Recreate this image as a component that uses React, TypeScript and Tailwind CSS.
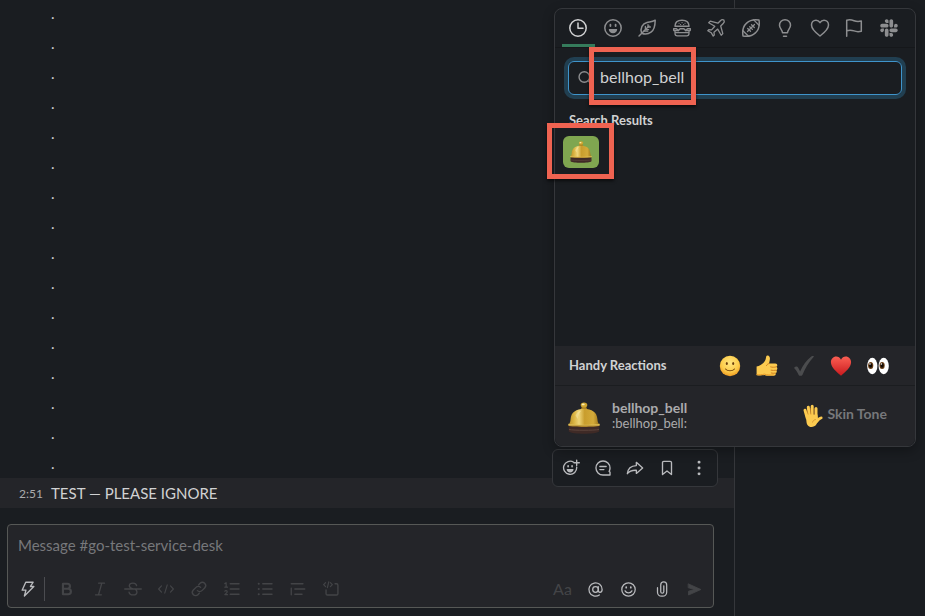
import { useState, type ReactNode } from "react";
import { clsx } from "clsx";
import { FaSlack } from "react-icons/fa";

type IconProps = {
  children: ReactNode;
  className?: string;
};

const Icon = ({ children, className = "size-5" }: IconProps) => (
  <svg
    viewBox="0 0 20 20"
    className={className}
    fill="none"
    stroke="currentColor"
    strokeWidth="1.5"
    strokeLinecap="round"
    strokeLinejoin="round"
    aria-hidden="true"
  >
    {children}
  </svg>
);

const Bell = ({ id, className }: { id: string; className: string }) => (
  <svg viewBox="0 0 32 32" className={className} aria-hidden="true">
    <defs>
      <linearGradient id={`${id}-dome`} x1="0" x2="1" y1="0" y2="0">
        <stop offset="0" stopColor="#b98f27" />
        <stop offset="0.18" stopColor="#dbb544" />
        <stop offset="0.34" stopColor="#eed478" />
        <stop offset="0.52" stopColor="#c99d2d" />
        <stop offset="0.8" stopColor="#d3aa3a" />
        <stop offset="1" stopColor="#9a7119" />
      </linearGradient>
      <linearGradient id={`${id}-rim`} x1="0" x2="0" y1="0" y2="1">
        <stop offset="0" stopColor="#efd061" />
        <stop offset="1" stopColor="#a37823" />
      </linearGradient>
    </defs>
    <path d="M.8 23.500h30.400v6c-2 1.600-8.200 2.200-15.200 2.200S2.800 31.100.8 29.500z" fill="#3f2a26" />
    <path d="M1 27.500c5 1 25 1 30 0" stroke="#5d453d" fill="none" />
    <path d="M14 4.500h4l1.600 4h-7.200z" fill="#a98021" />
    <ellipse cx="16" cy="3" rx="3.300" ry="2.500" fill="#cfa52f" />
    <ellipse cx="15.200" cy="2.400" rx="1.500" ry=".9" fill="#fbeeb0" />
    <path
      d="M.6 22.500c1.600-1.500 1.800-3.300 2-5.500C3 10.500 8.200 6.800 16 6.800S29 10.500 29.400 17c.2 2.200.4 4 2 5.500-4.400 1.700-26.400 1.700-30.800 0z"
      fill={`url(#${id}-dome)`}
    />
    <path d="M7.500 13.500c1.200-2.800 3.400-4.600 6-5-2 1.700-3.300 4.300-3.800 8.500z" fill="#fdf2bd" opacity=".4" />
    <path d="M.3 21.800c5 1.300 26.400 1.300 31.400 0v1.900c-5 1.600-26.400 1.600-31.400 0z" fill={`url(#${id}-rim)`} />
  </svg>
);

const CATEGORIES: { id: string; label: string; icon: ReactNode }[] = [
  {
    id: "recent",
    label: "Frequently used",
    icon: (
      <Icon>
        <circle cx="10" cy="10" r="8.200" />
        <path d="M10 5v5.300h5" />
      </Icon>
    ),
  },
  {
    id: "people",
    label: "Smileys",
    icon: (
      <Icon>
        <circle cx="10" cy="10" r="8.200" />
        <path d="M7.400 6.700v1.400M12.600 6.700v1.400" strokeWidth="1.800" />
        <path d="M5.800 11h8.400c0 2.600-1.700 4.300-4.200 4.300S5.800 13.600 5.800 11z" fill="currentColor" stroke="none" />
      </Icon>
    ),
  },
  {
    id: "nature",
    label: "Nature",
    icon: (
      <Icon>
        <path d="M2 18 12 8" strokeWidth="1.400" />
        <path d="M4.700 15.200C2.800 10 5.500 5.600 10 4.500c2.800-.7 5.200-.5 8.200-2.300-.1 6.300-1.200 10-4.200 12-2.600 1.800-6 2.300-9.300 1z" />
        <path d="M8.400 8.500v3.100h3.200M11 6.700V9h2.400M6.700 13.200h4" strokeWidth="1.300" />
      </Icon>
    ),
  },
  {
    id: "food",
    label: "Food",
    icon: (
      <Icon>
        <path d="M3 8.200c0-3.800 2.800-6 7-6s7 2.200 7 6z" />
        <path d="M7 5.200h.1M10 4.600h.1M13 5.200h.1M8.500 6.500h.1M11.600 6.500h.1" strokeWidth="1.100" />
        <path d="M1.800 10.800h2.700l1.700 1.800 1.900-1.800h3.800l1.900 1.800 1.700-1.800h2.700" />
        <path d="M2 10.700c-.8.800-.5 2 .6 2h3M18 10.700c.8.800.5 2-.6 2H14.500" strokeWidth="1.300" />
        <path d="M3 13v2.500c0 1.500.8 2.300 2.300 2.300h9.400c1.500 0 2.300-.8 2.300-2.300V13M3.200 14.700h13.600" strokeWidth="1.300" />
      </Icon>
    ),
  },
  {
    id: "travel",
    label: "Travel",
    icon: (
      <Icon>
        <path d="m17.900 2.100c-1-.7-2.500-.4-3.500.6l-2.500 2.500L4.300 3.100 2.700 4.700l6.100 3.500-3.200 3.700-2.800-.3-1 1.100 3.400 2 2 3.400 1.100-1-.3-2.800 3.700-3.200 3.500 6.100 1.600-1.600-2.100-7.600 2.500-2.500c1-1 1.400-2.400.7-3.400z" strokeWidth="1.300" />
      </Icon>
    ),
  },
  {
    id: "activity",
    label: "Activities",
    icon: (
      <Icon>
        <path d="M2 18c-.8-5 .3-9.900 3.600-12.900C8.800 2.100 13.500 1.200 18 2c.8 5-.3 9.900-3.600 12.900C11.200 17.900 6.500 18.800 2 18z" />
        <path d="M1.900 12.700 7.300 18M12.700 1.900 18 7.300M6.500 13.500l7-7M6.700 10.500l2.800 2.800M8.700 8.700l2.700 2.700M10.500 6.700l2.800 2.800" strokeWidth="1.300" />
      </Icon>
    ),
  },
  {
    id: "objects",
    label: "Objects",
    icon: (
      <Icon>
        <path d="M7.500 14.800c0-2.700-3-4.200-3-7.600a5.500 5.500 0 0 1 11 0c0 3.400-3 4.900-3 7.600z" />
        <path d="M8.500 18.200h3" />
      </Icon>
    ),
  },
  {
    id: "symbols",
    label: "Symbols",
    icon: (
      <Icon>
        <path d="M10 4.700C8.900 2.900 7.500 2.200 6 2.200 3.400 2.200 1.500 4.300 1.500 7c0 3.800 3.500 7.200 8.500 11 5-3.800 8.500-7.200 8.500-11 0-2.700-1.900-4.800-4.500-4.800-1.500 0-2.900.7-4 2.500z" />
      </Icon>
    ),
  },
  {
    id: "flags",
    label: "Flags",
    icon: (
      <Icon>
        <path d="M2.700 18.300V2.200c2.500-.7 4.700-.5 7.300.5s4.800 1 7.300.3v10.200c-2.500.7-4.700.7-7.300-.3s-4.800-1-7.300-.2" />
      </Icon>
    ),
  },
  { id: "custom", label: "Custom", icon: <FaSlack className="size-5" /> },
];

const FORMATTING: { label: string; icon: ReactNode }[] = [
  {
    label: "Bold",
    icon: (
      <Icon className="size-[18px]">
        <path d="M5.500 4.200h5a2.700 2.700 0 0 1 0 5.500h-5zM5.500 9.700h5.800a3 3 0 0 1 0 6.100H5.500z" strokeWidth="2.400" />
      </Icon>
    ),
  },
  {
    label: "Italic",
    icon: (
      <Icon className="size-[18px]">
        <path d="M8.500 3.500H15M5 16.500h6.500M12 3.500l-3.700 13" />
      </Icon>
    ),
  },
  {
    label: "Strikethrough",
    icon: (
      <Icon className="size-[18px]">
        <path d="M.8 10h18.400M14 6.200c-.4-1.800-1.800-2.800-4-2.800-2.500 0-4.100 1.200-4.100 3.100 0 1.600 1.100 2.600 4.100 3.400M5.600 13.400c.3 2 2 3.200 4.500 3.200 2.600 0 4.300-1.200 4.300-3.300 0-1.400-.6-2.400-2-3.200" />
      </Icon>
    ),
  },
  {
    label: "Code",
    icon: (
      <Icon className="size-[18px]">
        <path d="M5 6.500 1.800 10 5 13.500M15 6.500l3.200 3.500-3.200 3.500M11.400 5.500l-2.800 9" strokeWidth="1.300" />
      </Icon>
    ),
  },
  {
    label: "Link",
    icon: (
      <Icon className="size-[18px]">
        <path d="M8.200 11.800a3.600 3.600 0 0 0 5.100 0l3-3A3.600 3.600 0 0 0 11.200 3.700L9.700 5.200M11.800 8.200a3.600 3.600 0 0 0-5.100 0l-3 3a3.600 3.600 0 0 0 5.100 5.100l1.500-1.500" />
      </Icon>
    ),
  },
  {
    label: "Ordered list",
    icon: (
      <Icon className="size-[18px]">
        <path d="M8 4.200h9.800M8 10h9.800M8 15.800h9.800" />
        <path d="m2 4 1.500-1v5M2 8h3M2 12.500c.5-1 2.700-.9 2.700.5 0 1-1.200 1.600-2.700 3.300h3" strokeWidth="1.300" />
      </Icon>
    ),
  },
  {
    label: "Bulleted list",
    icon: (
      <Icon className="size-[18px]">
        <path d="M7.500 4.200h10.300M7.500 10h10.300M7.500 15.800h10.300" />
        <path d="M3 4.200h.1M3 10h.1M3 15.800h.1" strokeWidth="2.200" />
      </Icon>
    ),
  },
  {
    label: "Blockquote",
    icon: (
      <Icon className="size-[18px]">
        <path d="M2.500 4.200h13M6.500 10h11M6.500 15.800h8M2.500 9v7.500" />
      </Icon>
    ),
  },
  {
    label: "Code block",
    icon: (
      <Icon className="size-[18px]">
        <path d="M4 3 1.800 5.200 4 7.400M9.300 3l2.200 2.200-2.200 2.200M7.500 2 6 8.400" strokeWidth="1.300" />
        <path d="M14.500 4.200h1.700c.9 0 1.500.6 1.500 1.500v9.500c0 .9-.6 1.500-1.500 1.500H6c-.9 0-1.500-.6-1.500-1.500V11" />
      </Icon>
    ),
  },
];

const REACTIONS: { label: string; art: ReactNode }[] = [
  {
    label: "Slight smile",
    art: (
      <svg viewBox="0 0 22 22" className="size-[22px]" aria-hidden="true">
        <defs>
          <radialGradient id="smile-face" cx=".5" cy=".35" r=".65">
            <stop offset="0" stopColor="#ffe680" />
            <stop offset=".65" stopColor="#fccc4a" />
            <stop offset="1" stopColor="#ee9b22" />
          </radialGradient>
        </defs>
        <circle cx="11" cy="11" r="10.200" fill="url(#smile-face)" />
        <ellipse cx="7.800" cy="8.500" rx="1" ry="1.600" fill="#6a3d0c" />
        <ellipse cx="14.200" cy="8.500" rx="1" ry="1.600" fill="#6a3d0c" />
        <path d="M6.500 14c2 2.400 7 2.400 9 0" fill="none" stroke="#7a4a10" strokeWidth="1.100" strokeLinecap="round" />
      </svg>
    ),
  },
  {
    label: "Thumbs up",
    art: (
      <svg viewBox="0 0 22 22" className="size-[22px]" aria-hidden="true">
        <path d="M.6 11.500c3.200-.7 6.300-2.300 8.300-5.500.9-1.500 1-3 1.300-4.500.3-1.400 2.900-1.200 3.500.7.600 2-.1 4.300-.7 6.300h6.300c2.300 0 2.600 2.700 1 3.300 1.500.7 1.300 2.900-.1 3.300 1 .8.700 2.700-.7 3 .6 1.200-.1 2.500-1.600 2.600-3.900.2-7.300.3-9.500-.8-2.200.7-5.300.7-7.800.3z" fill="#fccb50" />
        <path d="M.6 19.500c2.800.4 5.600.3 7.800-.4 2.400 1 6 1 9.500.8" fill="none" stroke="#e89a26" strokeWidth="1" />
        <path d="M20.200 11.900c-2 .5-4 .5-5.500 0M20.100 15.200c-2 .3-3.500.3-5 0M19.400 18.100c-1.600.3-3 .2-4.200-.1M13 8.500c-1 .4-2 .9-2.500 2" fill="none" stroke="#c97919" strokeWidth=".9" strokeLinecap="round" />
      </svg>
    ),
  },
  {
    label: "Check mark",
    art: (
      <svg viewBox="0 0 22 22" className="size-[22px]" aria-hidden="true">
        <path d="M1.300 12.600c.8-1 2.600-1.400 3.300-.6.800.9 1.800 2.800 2.500 4.400C9.800 10.500 13.600 5 18.300 1.500c.9-.6 3-.6 2.500.2C15.600 7.200 12 13.300 9.400 20c-.4 1-3.100 1.200-3.600.2-1-2.300-2.400-5-4.300-6.800-.2-.3-.4-.5-.2-.8z" fill="#4b4c4e" />
      </svg>
    ),
  },
  {
    label: "Red heart",
    art: (
      <svg viewBox="0 0 22 22" className="size-[22px]" aria-hidden="true">
        <defs>
          <linearGradient id="heart-fill" x1="0" x2="0" y1="0" y2="1">
            <stop offset="0" stopColor="#fb5f53" />
            <stop offset="1" stopColor="#c91a1e" />
          </linearGradient>
        </defs>
        <path d="M11 4.700C9.900 2.500 8.200 1.500 6.300 1.500 3.200 1.500.9 4 .9 7.200c0 5 5.700 9.500 10.100 13.500 4.400-4 10.100-8.500 10.100-13.500 0-3.200-2.300-5.700-5.400-5.700-1.900 0-3.600 1-4.700 3.200z" fill="url(#heart-fill)" />
      </svg>
    ),
  },
  {
    label: "Eyes",
    art: (
      <svg viewBox="0 0 22 22" className="size-[22px]" aria-hidden="true">
        <ellipse cx="5.300" cy="11" rx="5.100" ry="8.300" fill="#fff" />
        <ellipse cx="16.700" cy="11" rx="5.100" ry="8.300" fill="#fff" />
        <ellipse cx="3.700" cy="10.500" rx="2.600" ry="3.500" fill="#6b3f16" />
        <ellipse cx="15.100" cy="10.500" rx="2.600" ry="3.500" fill="#6b3f16" />
        <ellipse cx="3.700" cy="10.500" rx="1.600" ry="2.300" fill="#120b06" />
        <ellipse cx="15.100" cy="10.500" rx="1.600" ry="2.300" fill="#120b06" />
        <circle cx="3" cy="9" r=".8" fill="#fff" />
        <circle cx="14.400" cy="9" r=".8" fill="#fff" />
      </svg>
    ),
  },
];

const MESSAGE_ACTIONS: { label: string; icon: ReactNode }[] = [
  {
    label: "Add reaction",
    icon: (
      <Icon className="size-[18px]">
        <path d="M13 3.600A7.300 7.300 0 1 0 16.300 9M16.300 1.200v6M13.300 4.200h6" />
        <path d="M6.800 7.500v1M11.200 7.500v1" strokeWidth="1.800" />
        <path d="M5.200 11h7.600c0 2.300-1.500 3.900-3.800 3.900S5.200 13.300 5.200 11z" fill="currentColor" stroke="none" />
      </Icon>
    ),
  },
  {
    label: "Reply in thread",
    icon: (
      <Icon className="size-[18px]">
        <path d="M10 2.200a7.800 7.800 0 1 0 0 15.600h7.800v-3.300l-1-.6c.6-1.200 1-2.500 1-3.900A7.800 7.800 0 0 0 10 2.200zM6.500 8.300h7M6.500 11.800h4.500" />
      </Icon>
    ),
  },
  {
    label: "Share",
    icon: (
      <Icon className="size-[18px]">
        <path d="M11.500 3.700 18.500 10l-7 6v-3.500C7 12.300 4 13 1.500 16.300 2 11 5.500 7.500 11.500 7.300z" />
      </Icon>
    ),
  },
  {
    label: "Save",
    icon: (
      <Icon className="size-[18px]">
        <path d="M5 4c0-.8.600-1.400 1.400-1.400h7.200c.8 0 1.400.6 1.400 1.400v13.300l-5-4-5 4z" />
      </Icon>
    ),
  },
  {
    label: "More actions",
    icon: (
      <Icon className="size-[18px]">
        <path d="M10 3.500h.1M10 10h.1M10 16.500h.1" strokeWidth="3.200" />
      </Icon>
    ),
  },
];

const EmojiPicker = () => {
  const [query, setQuery] = useState("bellhop_bell");
  const [tab, setTab] = useState("recent");

  return (
    <div className="absolute top-2 right-[9px] z-20 flex h-[439px] w-[362px] flex-col rounded-lg border border-[#35373b] bg-[#1a1d21] shadow-[0_4px_12px_rgba(0,0,0,0.3)]">
      <nav className="flex border-b border-[#15171a] pr-[9px] pl-[6px]">
        {CATEGORIES.map((category) => (
          <button
            key={category.id}
            aria-label={category.label}
            onClick={() => setTab(category.id)}
            className={clsx(
              "mx-px flex h-[38px] flex-1 items-center justify-center border-b-3 pt-[3px]",
              tab === category.id ? "border-[#357b5b] text-[#d1d2d3]" : "border-transparent text-[#8d8e90]"
            )}
          >
            {category.icon}
          </button>
        ))}
      </nav>

      <div className="flex-1 pt-[13px]">
        <div className="relative mx-[13px]">
          <label className="flex h-[34px] items-center gap-2 rounded-md border border-[#3f94cb] pl-[9px] ring-4 ring-[#213f51]">
            <Icon className="size-[14px] shrink-0 text-[#8d8e90]">
              <circle cx="9" cy="8.500" r="7.500" strokeWidth="2" />
              <path d="m14.500 14 4.500 4.500" strokeWidth="2" />
            </Icon>
            <input
              type="text"
              aria-label="Search emoji"
              value={query}
              onChange={(e) => setQuery(e.target.value)}
              className="w-full bg-transparent pb-[2px] text-[16px] text-[#d1d2d3] outline-none"
            />
          </label>
          {/* search term highlight */}
          <div className="pointer-events-none absolute -top-[14px] left-[21px] h-[58px] w-[107px] border-5 border-[#ef6351] shadow-[0_2px_3px_rgba(0,0,0,0.6)]" />
        </div>

        <h2 className="mt-[15px] ml-[14px] text-[13px] leading-5 font-bold text-[#d1d2d3]">Search Results</h2>
        <div className="relative mt-[6px] ml-2 w-9">
          <button aria-label="bellhop_bell" className="flex h-8 w-9 items-center justify-center rounded-md bg-[#7fa650]">
            <Bell id="result" className="size-[22px]" />
          </button>
          {/* result highlight */}
          <div className="pointer-events-none absolute -top-[13px] -left-4 h-[56px] w-[67px] border-5 border-[#ef6351] shadow-[0_2px_3px_rgba(0,0,0,0.6)]" />
        </div>
      </div>

      <div className="rounded-b-lg bg-[#242529]">
        <div className="flex h-10 items-center justify-between border-b border-[#1b1d20] pr-[26px] pl-[14px]">
          <h2 className="text-[13px] font-bold text-[#d1d2d3]">Handy Reactions</h2>
          <div className="flex gap-[15px]">
            {REACTIONS.map((reaction) => (
              <button key={reaction.label} aria-label={reaction.label}>
                {reaction.art}
              </button>
            ))}
          </div>
        </div>
        <div className="flex h-[60px] items-center pr-[28px] pl-[13px]">
          <Bell id="preview" className="mt-1 size-8" />
          <div className="ml-3 flex-1 pb-[2px]">
            <p className="text-[14px] leading-4 font-bold text-[#ababad]">bellhop_bell</p>
            <p className="text-[13px] leading-[14px] text-[#ababad]">:bellhop_bell:</p>
          </div>
          <button className="flex items-center gap-1 pb-[6px] text-[14px] font-bold text-[#77787b]">
            <svg viewBox="0 0 20 24" className="mt-[6px] h-6 w-5" aria-hidden="true">
              <g fill="none" stroke="#fccb50" strokeLinecap="round" strokeWidth="3">
                <path d="M2 6.200 4.200 14M5.300 3.200 6.500 13M9.200 2.200V13M13 4.500V14" />
                <path d="M18.200 13.800c-2 .2-3 1.500-4.700 4" strokeWidth="2.800" />
              </g>
              <path d="M2.700 10.500h11.700l.6 4.600c-.4 4.800-2.400 7.900-6.500 7.900-3.400 0-4.900-2.500-5.100-6z" fill="#fccb50" />
              <path d="M3.800 6 5.200 10.500M7.300 4 7.900 10.500M11.100 4.500V10.500M9.500 18.500c.4-1.700 1.500-2.800 3.300-3" fill="none" stroke="#c98325" strokeWidth=".7" />
            </svg>
            Skin Tone
          </button>
        </div>
      </div>
    </div>
  );
};

const Composer = () => (
  <form className="mt-4 mr-5 mb-2 ml-[7px] rounded border border-[#565856] bg-[#242529]">
    <textarea
      aria-label="Message"
      placeholder="Message #go-test-service-desk"
      className="block h-[42px] w-full resize-none px-[10px] pt-[9px] text-[15px] leading-[22px] text-[#d1d2d3] outline-none placeholder:text-[#77787b]"
    />
    <div className="flex h-10 items-center pt-1 pr-[2px] pl-[3px] text-[#434447]">
      <button type="button" aria-label="Shortcuts" className="flex w-[33px] justify-center text-[#b9babd]">
        <Icon className="size-[18px]">
          <path d="M7.500 2.500h8.200l-3 4.700h3.800L6 17.800l1.700-6.500H3.500z" />
        </Icon>
      </button>
      <span className="mr-[5px] h-6 w-px bg-[#4b4c50]" />
      {FORMATTING.map((item) => (
        <button key={item.label} type="button" aria-label={item.label} className="flex w-[33px] justify-center">
          {item.icon}
        </button>
      ))}
      <button type="button" className="ml-auto w-[33px] text-center text-[16px]">
        Aa
      </button>
      <button type="button" aria-label="Mention someone" className="flex w-[33px] justify-center text-[#b9babd]">
        <Icon className="size-[17px]">
          <circle cx="10" cy="10" r="3.300" />
          <path d="M13.300 6.700V11c0 1.500.8 2.300 2 2.300 1.700 0 2.500-1.500 2.500-3.300A7.800 7.800 0 1 0 14.500 16.400" />
        </Icon>
      </button>
      <button type="button" aria-label="Emoji" className="flex w-[33px] justify-center text-[#b9babd]">
        <Icon className="size-[17px]">
          <circle cx="10" cy="10" r="7.900" />
          <path d="M7.300 7.200v.6M12.700 7.200v.6" strokeWidth="2" />
          <path d="M6 11.600c1.600 3.300 6.400 3.300 8 0" />
        </Icon>
      </button>
      <button type="button" aria-label="Attach file" className="flex w-[33px] justify-center text-[#b9babd]">
        <Icon className="size-[18px]">
          <path d="M5 8.500v5a4.500 4.500 0 0 0 4.500 4.500h1.200a4.500 4.500 0 0 0 4.500-4.500V5.500a3.300 3.300 0 0 0-6.600 0V13a1.700 1.700 0 0 0 3.400 0V6.500" strokeWidth="1.400" />
        </Icon>
      </button>
      <button type="submit" aria-label="Send" className="flex w-[33px] justify-center">
        <Icon className="size-[17px]">
          <path d="M3 3.500 17.500 10 3 16.500V12l7-2-7-2z" fill="currentColor" stroke="currentColor" strokeWidth="1" />
        </Icon>
      </button>
    </div>
  </form>
);

const App = () => {
  const DOTS = Array.from({ length: 16 }, (_, i) => i);

  return (
    <div className="relative flex h-screen overflow-hidden bg-[#1a1d21] font-['Lato',sans-serif] text-[#d1d2d3]">
      <main className="flex min-w-0 flex-1 flex-col border-r border-[#35373b]">
        <div className="flex min-h-0 flex-1 flex-col justify-end overflow-hidden">
          {DOTS.map((dot) => (
            <p key={dot} className="h-[30px] shrink-0 pl-[51px] text-[15px] leading-[30px]">
              .
            </p>
          ))}
          <div className="relative flex h-[30px] shrink-0 items-center bg-[#242529] pl-[19px]">
            <time className="w-8 pt-[2px] text-[12px] text-[#ababad]">2:51</time>
            <p className="text-[15px]">TEST — PLEASE IGNORE</p>
            <div className="absolute right-4 bottom-[21px] z-10 flex h-[38px] items-center rounded-md border border-[#35373b] bg-[#1a1d21] px-[2px] text-[#b9babd]">
              {MESSAGE_ACTIONS.map((action) => (
                <button key={action.label} aria-label={action.label} className="flex w-8 justify-center">
                  {action.icon}
                </button>
              ))}
            </div>
          </div>
        </div>
        <Composer />
      </main>
      <aside className="w-[190px] shrink-0" />
      <EmojiPicker />
    </div>
  );
};

export default App;
